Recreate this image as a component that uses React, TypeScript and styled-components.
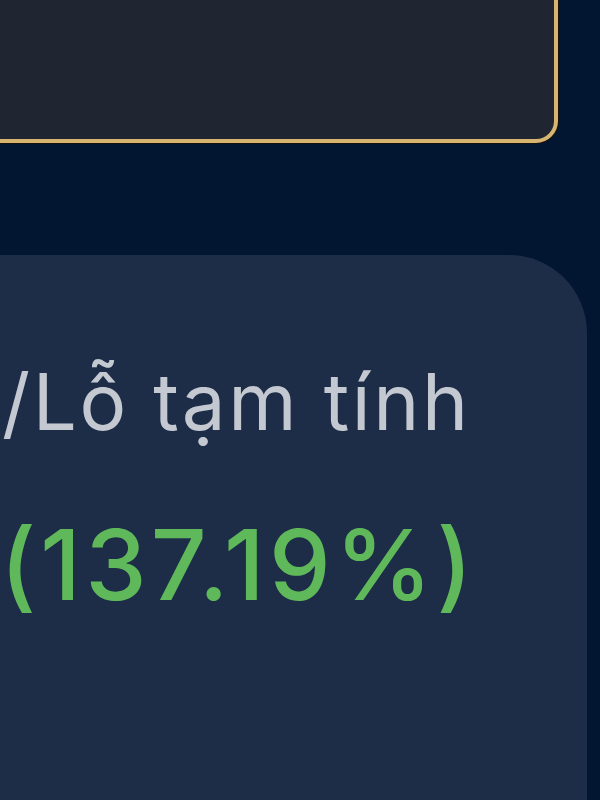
import React from 'react';
import styled, { createGlobalStyle } from 'styled-components';

const GlobalStyle = createGlobalStyle`
  html, body {
    margin: 0;
    padding: 0;
    background: #031631;
    overflow: hidden;
  }
  body {
    font-family: Inter, 'Noto Sans', sans-serif;
  }
`;

const Screen = styled.div`
  width: 600px;
  height: 800px;
  overflow: hidden;
  background: #031631;
  display: flex;
  flex-direction: column;
`;

const GoldPanel = styled.div`
  margin-top: -40px;
  margin-left: -40px;
  width: 598px;
  height: 183px;
  box-sizing: border-box;
  flex-shrink: 0;
  background: #1f2631;
  border: 4px solid #d8b471;
  border-radius: 22px;
  box-shadow: 0 0 0 1px #15120c;
`;

const Card = styled.div`
  margin-top: 112px;
  margin-left: -80px;
  width: 667px;
  flex: 1;
  box-sizing: border-box;
  background: #1d2d48;
  border-top-right-radius: 78px;
  padding: 100px 0 0 82px;
  display: flex;
  flex-direction: column;
`;

const Label = styled.div`
  color: #c3c8d1;
  font-size: 78px;
  font-weight: 400;
  line-height: 94px;
  letter-spacing: 2.6px;
  white-space: nowrap;
`;

const Value = styled.div`
  margin-top: 61px;
  margin-left: -2px;
  color: #5fb85a;
  font-size: 98px;
  font-weight: 500;
  line-height: 110px;
  letter-spacing: 4.2px;
  white-space: nowrap;
`;

export default function App() {
  return (
    <>
      <GlobalStyle />
      <Screen>
        <GoldPanel />
        <Card>
          <Label>/Lỗ tạm tính</Label>
          <Value>(137.19%)</Value>
        </Card>
      </Screen>
    </>
  );
}
